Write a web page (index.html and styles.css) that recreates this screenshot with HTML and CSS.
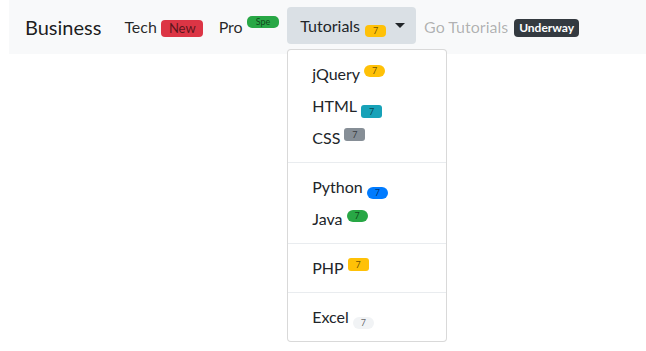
FILE: index.html
```html
<!DOCTYPE html>
<html>
<head>
<meta charset="utf-8">
<link rel="stylesheet" href="styles.css">
</head>
<body>
<nav class="navbar">
  <a class="brand">Business</a>
  <ul class="nav">
    <li><a class="nav-link">Tech<span class="badge badge-new">New</span></a></li>
    <li><a class="nav-link">Pro<span class="badge badge-spe">Spe</span></a></li>
    <li class="dropdown">
      <button class="toggle">Tutorials<span class="badge badge-tut">7</span><span class="caret"></span></button>
      <div class="menu">
        <a class="item">jQuery<span class="mb warning pill up">7</span></a>
        <a class="item">HTML<span class="mb info down">7</span></a>
        <a class="item">CSS<span class="mb secondary up">7</span></a>
        <div class="divider"></div>
        <a class="item">Python<span class="mb primary pill down">7</span></a>
        <a class="item">Java<span class="mb success pill up">7</span></a>
        <div class="divider"></div>
        <a class="item">PHP<span class="mb warning up">7</span></a>
        <div class="divider"></div>
        <a class="item">Excel<span class="mb light pill down">7</span></a>
      </div>
    </li>
    <li><a class="nav-link disabled">Go Tutorials<span class="badge badge-dark">Underway</span></a></li>
  </ul>
</nav>
</body>
</html>
```
FILE: styles.css
```css
html, body {
  margin: 0;
  padding: 0;
  background: #fff;
}
body {
  min-height: 351px;
  padding-left: 9px;
  font-family: Lato, "Open Sans", sans-serif;
  color: #212529;
}
.navbar {
  display: flex;
  align-items: center;
  height: 54px;
  box-sizing: border-box;
  padding: 0 16px;
  background: #f8f9fa;
}
.brand {
  font-size: 20px;
  line-height: 30px;
  color: rgba(0, 0, 0, 0.9);
  margin-right: 15px;
}
.nav {
  display: flex;
  align-items: center;
  list-style: none;
  margin: 0;
  padding: 0;
}
.nav-link {
  display: block;
  padding: 8px;
  font-size: 16px;
  line-height: 24px;
  color: rgba(0, 0, 0, 0.85);
}
.nav-link.disabled {
  color: rgba(0, 0, 0, 0.3);
}
.badge {
  display: inline-block;
  text-align: center;
  white-space: nowrap;
}
.badge-new {
  margin-left: 4px;
  background: #dc3545;
  color: rgba(0, 0, 0, 0.6);
  font-size: 13px;
  line-height: 17px;
  height: 17px;
  padding: 0 7px 0 8px;
  border-radius: 4px;
}
.badge-spe {
  margin-left: 4px;
  background: #28a745;
  color: rgba(0, 0, 0, 0.6);
  font-size: 9px;
  line-height: 12px;
  height: 12px;
  padding: 0 9px;
  border-radius: 5px;
  vertical-align: 8px;
}
.badge-dark {
  margin-left: 6px;
  background: #343a40;
  color: #fff;
  font-weight: 700;
  font-size: 12px;
  line-height: 18px;
  height: 18px;
  padding: 0 5px;
  border-radius: 4px;
  vertical-align: 1px;
}
.dropdown {
  position: relative;
}
.toggle {
  display: flex;
  align-items: center;
  height: 37px;
  margin-bottom: 3px;
  padding: 0 11px 0 13px;
  border: none;
  border-radius: 4px;
  background: #dae0e5;
  font-family: inherit;
  font-size: 16px;
  line-height: 24px;
  color: #212529;
}
.badge-tut {
  margin-left: 5px;
  margin-top: 10px;
  background: #ffc107;
  color: rgba(0, 0, 0, 0.6);
  font-size: 9px;
  line-height: 12px;
  width: 21px;
  height: 12px;
  border-radius: 4px;
}
.caret {
  margin-left: 9px;
  width: 0;
  height: 0;
  border-top: 5px solid #212529;
  border-left: 5px solid transparent;
  border-right: 5px solid transparent;
}
.menu {
  position: absolute;
  left: 0;
  top: calc(100% + 2px);
  width: 160px;
  box-sizing: border-box;
  padding: 8px 0;
  background: #fff;
  border: 1px solid rgba(0, 0, 0, 0.15);
  border-radius: 4px;
  display: flex;
  flex-direction: column;
}
.item {
  display: block;
  padding: 4px 24px;
  font-size: 16px;
  line-height: 24px;
  color: #212529;
  white-space: nowrap;
}
.divider {
  height: 0;
  margin: 8px 0;
  border-top: 1px solid #e9ecef;
}
.mb {
  display: inline-block;
  margin-left: 4px;
  width: 21px;
  height: 13px;
  font-size: 9px;
  line-height: 13px;
  text-align: center;
  border-radius: 3px;
  color: rgba(0, 0, 0, 0.6);
}
.mb.pill {
  border-radius: 7px;
  height: 12px;
  line-height: 12px;
}
.mb.up {
  vertical-align: 6px;
}
.mb.down {
  vertical-align: -3px;
}
.warning { background: #ffc107; }
.info { background: #17a2b8; }
.secondary { background: #868e96; }
.primary { background: #007bff; }
.success { background: #28a745; }
.light { background: #f1f3f5; }
```
